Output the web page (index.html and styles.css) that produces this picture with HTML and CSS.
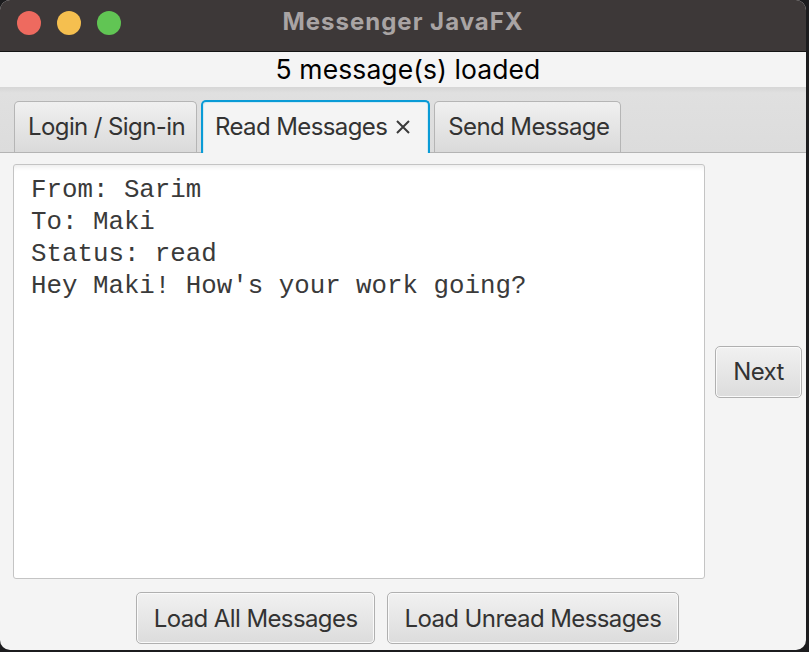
FILE: index.html
```html
<!DOCTYPE html>
<html>
<head>
<meta charset="utf-8">
<link rel="stylesheet" href="styles.css">
</head>
<body>
<div class="window">
  <div class="titlebar">
    <div class="lights">
      <span class="light red"></span>
      <span class="light yellow"></span>
      <span class="light green"></span>
    </div>
    <div class="title">Messenger JavaFX</div>
    <div></div>
  </div>
  <div class="status">5 message(s) loaded</div>
  <div class="tabheader">
    <div class="tab">Login / Sign-in</div>
    <div class="tab selected">Read Messages<svg class="close" width="16" height="16" viewBox="0 0 16 16"><path d="M2 2 L14 14 M14 2 L2 14" stroke="#3a3a3a" stroke-width="2" fill="none"/></svg></div>
    <div class="tab">Send Message</div>
  </div>
  <div class="content">
    <div class="textarea">From: Sarim
To: Maki
Status: read
Hey Maki! How's your work going?</div>
    <div class="side">
      <button class="btn next">Next</button>
    </div>
  </div>
  <div class="bottom">
    <button class="btn load-all">Load All Messages</button>
    <button class="btn load-unread">Load Unread Messages</button>
  </div>
</div>
</body>
</html>
```

FILE: styles.css
```css
html, body {
  margin: 0;
  padding: 0;
}
body {
  background: #1c1c1e;
  width: 809px;
  height: 652px;
  overflow: hidden;
}
.window {
  width: 806px;
  height: 650px;
  border-radius: 10px;
  overflow: hidden;
  background: #f4f4f4;
  display: flex;
  flex-direction: column;
  font-family: "Inter", "Liberation Sans", sans-serif;
  color: #333333;
}
.titlebar {
  height: 51px;
  background: #3d3838;
  border-bottom: 1px solid #141414;
  display: grid;
  grid-template-columns: 1fr auto 1fr;
  align-items: center;
}
.lights {
  display: flex;
  gap: 16px;
  padding-left: 17px;
  padding-bottom: 6px;
}
.light {
  width: 24px;
  height: 24px;
  border-radius: 50%;
  display: block;
}
.red { background: #ee6a5f; }
.yellow { background: #f5bf4f; }
.green { background: #61c554; }
.title {
  color: #a9a4a4;
  font-weight: 700;
  font-size: 24px;
  letter-spacing: 1px;
  padding-bottom: 9px;
}
.status {
  height: 35px;
  background: #f4f4f4;
  color: #000;
  font-size: 26.5px;
  letter-spacing: 0.1px;
  text-align: center;
  line-height: 35px;
  padding-left: 10px;
}
.tabheader {
  height: 65px;
  background: linear-gradient(#d6d6d6 0px, #e0e0e0 6px, #dcdcdc 100%);
  border-bottom: 1px solid #b4b4b4;
  display: flex;
  align-items: flex-end;
  gap: 4px;
  padding-left: 14px;
}
.tab {
  height: 51px;
  box-sizing: border-box;
  border: 1px solid #b5b5b5;
  border-bottom: none;
  border-radius: 5px 5px 0 0;
  background: linear-gradient(#f0f0f0, #dadada);
  padding: 0 11px 0 13px;
  font-size: 24px;
  line-height: 52px;
  color: #333;
  white-space: nowrap;
  letter-spacing: -0.6px;
  display: flex;
  align-items: center;
}
.tab.selected {
  height: 53px;
  margin-bottom: -1px;
  background: #f4f4f4;
  border: 2px solid #0a9bd6;
  border-bottom: none;
  box-shadow: inset 1px 1px 0 #d4eaf3, inset -1px 0 0 #d4eaf3;
  padding: 0 17px 2px 12px;
  gap: 8px;
}
.close {
  display: block;
}
.content {
  display: flex;
  padding: 11px 0 0 13px;
}
.textarea {
  width: 692px;
  height: 415px;
  box-sizing: border-box;
  background: #fff;
  border: 1px solid #c4c4c4;
  border-radius: 3px;
  box-shadow: inset 0 6px 5px -4px rgba(0,0,0,0.08);
  font-family: "Liberation Mono", "Courier New", monospace;
  font-size: 25.8px;
  line-height: 32px;
  color: #3a3a3a;
  padding: 10px 17px;
  white-space: pre;
}
.side {
  display: flex;
  align-items: center;
  padding-left: 10px;
}
.btn {
  font-family: "Inter", "Liberation Sans", sans-serif;
  font-size: 24px;
  color: #333;
  height: 52px;
  box-sizing: border-box;
  border: 1px solid #b0b0b0;
  border-radius: 5px;
  background: linear-gradient(#f1f1f1, #dcdcdc);
  box-shadow: inset 0 0 0 1px #fafafa;
  padding: 0 16.5px;
  letter-spacing: -0.6px;
}
.next {
  width: 87px;
  padding: 0;
}
.bottom {
  display: flex;
  justify-content: center;
  gap: 12px;
  padding-top: 13px;
  padding-left: 9px;
}
```
